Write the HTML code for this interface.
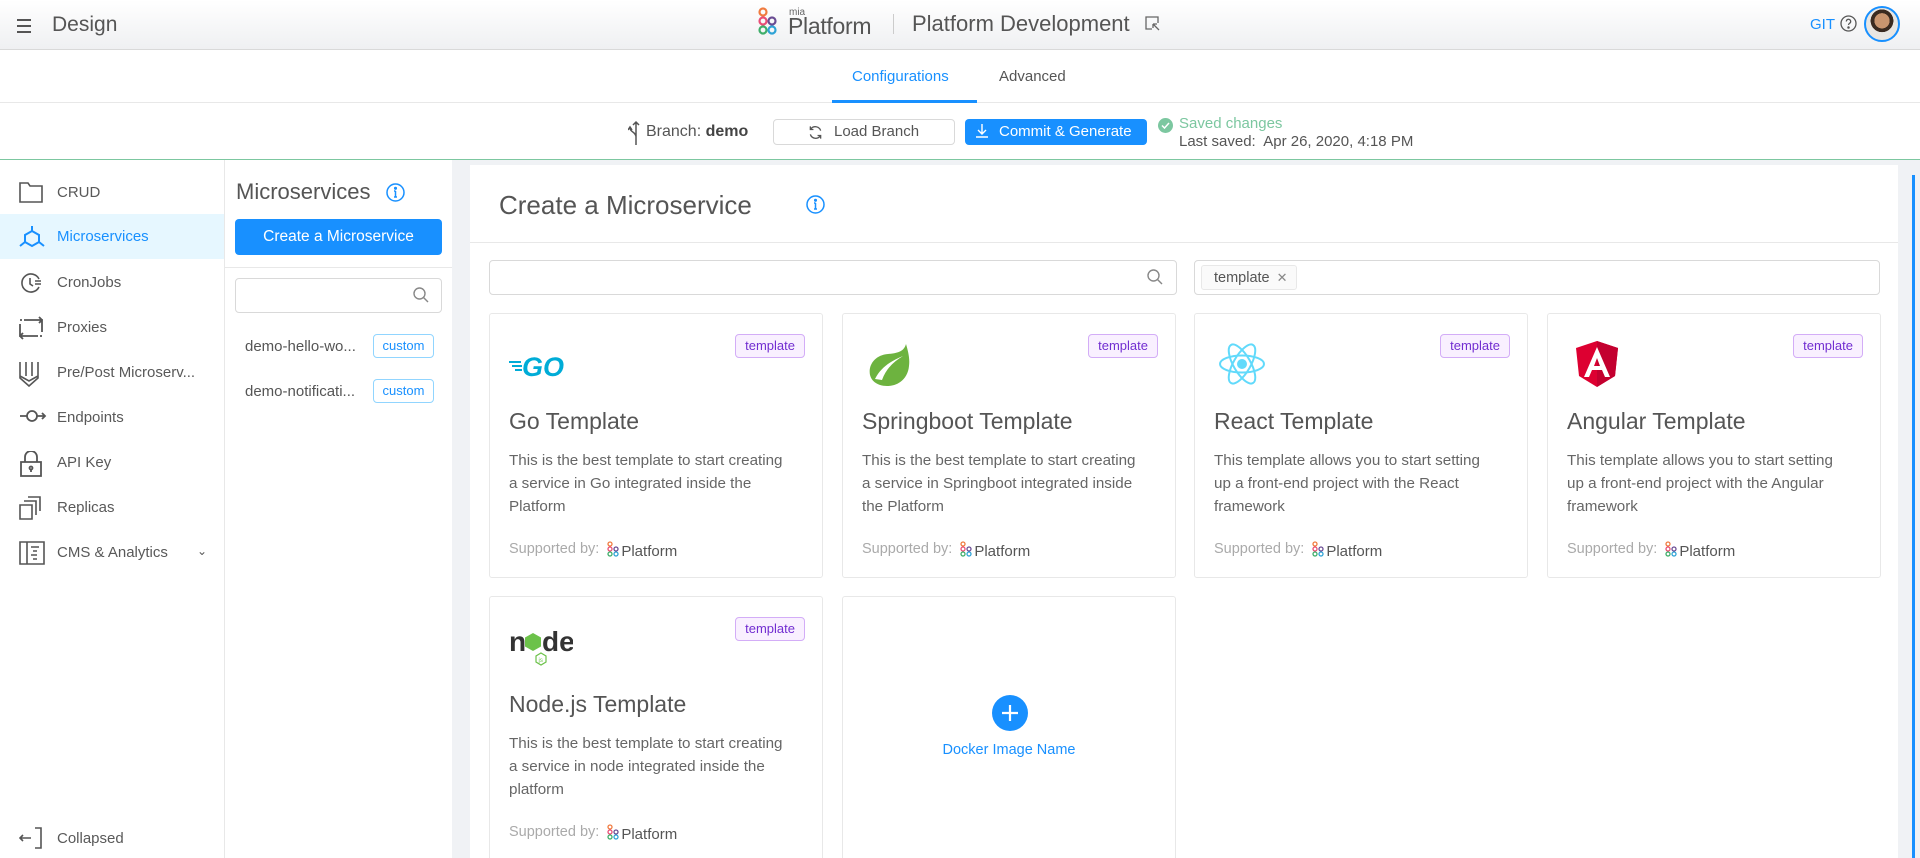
<!DOCTYPE html>
<html><head><meta charset="utf-8"><style>
*{box-sizing:border-box;margin:0;padding:0}
html,body{width:1920px;height:858px;overflow:hidden}
body{font-family:"Liberation Sans",sans-serif;color:#595959;background:#fff;position:relative}
.abs{position:absolute}
.hdr{left:0;top:0;width:1920px;height:50px;background:linear-gradient(#fff,#eff0f2);border-bottom:1px solid #d9d9d9}
.tabs{left:0;top:51px;width:1920px;height:52px;border-bottom:1px solid #e8e8e8;background:#fff}
.br{left:0;top:103px;width:1920px;height:57px;border-bottom:1px solid #7cc7a0;background:#fff}
.side{left:0;top:160px;width:225px;height:698px;border-right:1px solid #e8e8e8}
.si{position:absolute;left:0;width:224px;height:45px;font-size:15px;line-height:45px;padding-left:57px;color:#595959}
.si svg{position:absolute;left:19px;top:11px}
.col{left:225px;top:160px;width:227px;height:698px}
.main{left:452px;top:160px;width:1468px;height:698px;background:#f0f2f5;overflow:hidden}
.card{position:absolute;background:#fff;border:1px solid #e8e8e8;border-radius:3px;width:334px}
.tg{position:absolute;top:20px;right:17px;height:24px;padding:0 9px;font-size:13px;line-height:22px;color:#722ed1;background:#f9f0ff;border:1px solid #d3adf7;border-radius:4px}
.ct{position:absolute;left:19px;top:94px;font-size:23px;color:#555}
.cd{position:absolute;left:19px;top:135px;width:310px;font-size:15.2px;line-height:23px;color:#666;white-space:nowrap}
.sb{position:absolute;left:19px;top:224px;font-size:14.5px;color:#aaa;display:flex;align-items:center}
.inp{position:absolute;border:1px solid #d9d9d9;border-radius:4px;background:#fff}
</style></head><body>
<div class="abs hdr">
 <div class="abs" style="left:17px;top:19px;width:14px">
  <div style="height:2px;background:#555;margin-bottom:4px"></div><div style="height:2px;background:#555;margin-bottom:4px"></div><div style="height:2px;background:#555"></div></div>
 <div class="abs" style="left:52px;top:13px;font-size:21px;color:#555">Design</div>
 <svg class="abs" style="left:757px;top:7px" width="28" height="28" viewBox="0 0 28 28" fill="none" stroke-width="2.2">
  <circle cx="6" cy="5" r="3.5" stroke="#f07b3f"/><circle cx="6" cy="14" r="3.5" stroke="#e94e77"/><circle cx="15" cy="14" r="3.5" stroke="#6a4c93"/><circle cx="6" cy="23" r="3.5" stroke="#3fae6a"/><circle cx="15" cy="23" r="3.5" stroke="#2ea3d6"/></svg>
 <div class="abs" style="left:789px;top:7px;font-size:10px;color:#666">mia</div>
 <div class="abs" style="left:788px;top:13px;font-size:23px;color:#555;letter-spacing:-0.3px">Platform</div>
 <div class="abs" style="left:893px;top:14px;width:1px;height:20px;background:#ccc"></div>
 <div class="abs" style="left:912px;top:11px;font-size:22px;color:#555">Platform Development</div>
 <svg class="abs" style="left:1145px;top:16px" width="15" height="15" viewBox="0 0 15 15" fill="none" stroke="#666" stroke-width="1.3"><path d="M13 7V1H1v12h6"/><path d="M8 8l6 6M8 8h4M8 8v4"/></svg>
 <div class="abs" style="left:1810px;top:16px;font-size:15px;color:#1890ff">GIT</div>
 <svg class="abs" style="left:1840px;top:15px" width="17" height="17" viewBox="0 0 17 17" fill="none" stroke="#555" stroke-width="1.3"><circle cx="8.5" cy="8.5" r="7.5"/><path d="M6.3 6.5a2.2 2.2 0 114 1.2c-.8.7-1.8 1-1.8 2.3"/><circle cx="8.5" cy="12.5" r=".6" fill="#555"/></svg>
 <div class="abs" style="left:1864px;top:6px;width:36px;height:36px;border-radius:50%;border:2px solid #1890ff;background:radial-gradient(circle at 50% 40%,#c9956f 0 30%,#3a2a20 31% 45%,#e9e6e2 46%)"></div>
</div>
<div class="abs tabs">
 <div class="abs" style="left:852px;top:17px;font-size:15px;color:#1890ff">Configurations</div>
 <div class="abs" style="left:832px;top:49px;width:145px;height:3px;background:#1890ff"></div>
 <div class="abs" style="left:999px;top:17px;font-size:15px;color:#555">Advanced</div>
</div>
<div class="abs br">
 <svg class="abs" style="left:628px;top:17px" width="14" height="26" viewBox="0 0 14 26" fill="none" stroke="#555" stroke-width="1.5"><path d="M8 25V2M5 5l3-3 3 3M8 17C8 12 2 12 2 8M0 10l2-3 2 3"/></svg>
 <div class="abs" style="left:646px;top:20px;font-size:16px;color:#555">Branch: <b style="color:#444">demo</b></div>
 <div class="abs" style="left:773px;top:16px;width:182px;height:26px;border:1px solid #d9d9d9;border-radius:4px;font-size:15px;line-height:24px;color:#555;padding-left:60px">Load Branch</div>
 <svg class="abs" style="left:808px;top:22px" width="15" height="15" viewBox="0 0 16 16" fill="none" stroke="#555" stroke-width="1.4"><path d="M13.5 6A6 6 0 002.8 4.5M2.5 10a6 6 0 0010.7 1.5M2.5 1.5v3.3h3.3M13.5 14.5v-3.3h-3.3"/></svg>
 <div class="abs" style="left:965px;top:16px;width:182px;height:26px;background:#1890ff;border-radius:4px;font-size:15px;line-height:26px;color:#fff;padding-left:34px">Commit &amp; Generate</div>
 <svg class="abs" style="left:975px;top:20px" width="14" height="16" viewBox="0 0 14 16" fill="none" stroke="#fff" stroke-width="1.4"><path d="M7 1v10M3 7l4 4 4-4M1 14h12"/></svg>
 <div class="abs" style="left:1158px;top:15px;width:15px;height:15px;border-radius:50%;background:#7cc7a0"></div>
 <svg class="abs" style="left:1161px;top:18px" width="9" height="9" viewBox="0 0 9 9" fill="none" stroke="#fff" stroke-width="1.5"><path d="M1 4.5l2.5 2.5L8 2"/></svg>
 <div class="abs" style="left:1179px;top:12px;font-size:15px;color:#7cc7a0">Saved changes</div>
 <div class="abs" style="left:1179px;top:30px;font-size:15px;color:#555">Last saved:&nbsp; Apr 26, 2020, 4:18 PM</div>
</div>
<div class="abs side">
 <div class="si" style="top:10px"><svg width="24" height="22" viewBox="0 0 24 22" fill="none" stroke="#555" stroke-width="1.6"><path d="M1 2h8l2 3h12v16H1z"/></svg>CRUD</div>
 <div class="si" style="top:54px;background:#e6f7ff;color:#1890ff"><svg width="26" height="24" viewBox="0 0 26 24" fill="none" stroke="#1890ff" stroke-width="2"><path d="M13 1v5M13 6l7 4v7l-7 4-7-4v-7zM6 17l-5 4M20 17l5 4"/></svg>Microservices</div>
 <div class="si" style="top:100px"><svg width="24" height="24" viewBox="0 0 24 24" fill="none" stroke="#555" stroke-width="1.6"><path d="M20 8A9 9 0 1020 16"/><path d="M11 7v6l3 2M16 10h6M16 13h6"/></svg>CronJobs</div>
 <div class="si" style="top:145px"><svg width="24" height="24" viewBox="0 0 24 24" fill="none" stroke="#555" stroke-width="1.8"><path d="M5 4h18v12M1 4h2M20 1l3 3-3 3M19 20H1V8M21 20h2M4 23l-3-3 3-3"/></svg>Proxies</div>
 <div class="si" style="top:190px"><svg width="20" height="26" viewBox="0 0 20 26" fill="none" stroke="#555" stroke-width="1.6"><path d="M1 1v16l9 8 9-8V1M7 1v14M13 1v14M1 15l9 5 9-5"/></svg>Pre/Post Microserv...</div>
 <div class="si" style="top:235px"><svg width="28" height="20" viewBox="0 0 28 20" fill="none" stroke="#555" stroke-width="1.8"><path d="M1 10h7M18 10h8M23 7l3 3-3 3"/><circle cx="13" cy="10" r="5"/></svg>Endpoints</div>
 <div class="si" style="top:280px"><svg width="24" height="26" viewBox="0 0 24 26" fill="none" stroke="#555" stroke-width="1.8"><path d="M2 11h20v14H2zM6 11V6a6 6 0 0112 0v5"/><circle cx="12" cy="17" r="1.5"/><path d="M12 18v3"/></svg>API Key</div>
 <div class="si" style="top:325px"><svg width="22" height="24" viewBox="0 0 22 24" fill="none" stroke="#555" stroke-width="1.6"><path d="M1 9h12v14H1zM5 5h12v14M9 1h12v14"/></svg>Replicas</div>
 <div class="si" style="top:370px"><svg width="26" height="24" viewBox="0 0 26 24" fill="none" stroke="#555" stroke-width="1.6"><path d="M1 1h24v22H1zM8 1v22M12 6h8M14 10h4M12 14h6M14 18h4"/></svg>CMS &amp; Analytics<span style="position:absolute;left:197px;top:-1px;font-size:12px">&#8964;</span></div>
 <div class="si" style="top:656px"><svg width="24" height="22" viewBox="0 0 24 22" fill="none" stroke="#555" stroke-width="1.6"><path d="M16 1h6v20h-6M1 11h11M4 8l-3 3 3 3"/></svg>Collapsed</div>
</div>
<div class="abs col">
 <div class="abs" style="left:11px;top:19px;font-size:22px;color:#555">Microservices</div>
 <svg class="abs" style="left:161px;top:23px" width="19" height="19" viewBox="0 0 19 19" fill="none" stroke="#1890ff" stroke-width="1.5"><circle cx="9.5" cy="9.5" r="8.5"/><path d="M9.5 8v6M8 14h3M8 8h1.5"/><circle cx="9.5" cy="5.3" r=".8" fill="#1890ff"/></svg>
 <div class="abs" style="left:10px;top:59px;width:207px;height:36px;background:#1890ff;border-radius:4px;color:#fff;font-size:15.5px;line-height:36px;text-align:center">Create a Microservice</div>
 <div class="abs" style="left:0;top:107px;width:227px;height:1px;background:#e8e8e8"></div>
 <div class="inp" style="left:10px;top:118px;width:207px;height:35px"></div>
 <svg class="abs" style="left:188px;top:127px" width="16" height="16" viewBox="0 0 16 16" fill="none" stroke="#888" stroke-width="1.4"><circle cx="6.5" cy="6.5" r="5.5"/><path d="M10.5 10.5l4.5 4.5"/></svg>
 <div class="abs" style="left:20px;top:178px;font-size:15px;color:#555">demo-hello-wo...</div>
 <div class="abs" style="left:148px;top:174px;width:61px;height:24px;border:1px solid #91d5ff;border-radius:4px;color:#1890ff;font-size:13px;line-height:22px;text-align:center">custom</div>
 <div class="abs" style="left:20px;top:223px;font-size:15px;color:#555">demo-notificati...</div>
 <div class="abs" style="left:148px;top:219px;width:61px;height:24px;border:1px solid #91d5ff;border-radius:4px;color:#1890ff;font-size:13px;line-height:22px;text-align:center">custom</div>
</div>
<div class="abs main">
 <div class="abs" style="left:1460px;top:15px;width:3px;height:683px;background:#1890ff"></div>
 <div class="abs" style="left:18px;top:5px;width:1428px;height:693px;background:#fff;overflow:hidden">
  <div class="abs" style="left:29px;top:25px;font-size:26px;color:#555">Create a Microservice</div>
  <svg class="abs" style="left:336px;top:30px" width="19" height="19" viewBox="0 0 19 19" fill="none" stroke="#1890ff" stroke-width="1.5"><circle cx="9.5" cy="9.5" r="8.5"/><path d="M9.5 8v6M8 14h3M8 8h1.5"/><circle cx="9.5" cy="5.3" r=".8" fill="#1890ff"/></svg>
  <div class="abs" style="left:0;top:77px;width:1428px;height:1px;background:#e8e8e8"></div>
  <div class="inp" style="left:19px;top:95px;width:688px;height:35px"></div>
  <svg class="abs" style="left:677px;top:104px" width="16" height="16" viewBox="0 0 16 16" fill="none" stroke="#888" stroke-width="1.4"><circle cx="6.5" cy="6.5" r="5.5"/><path d="M10.5 10.5l4.5 4.5"/></svg>
  <div class="inp" style="left:724px;top:95px;width:686px;height:35px"></div>
  <div class="abs" style="left:731px;top:100px;width:96px;height:25px;background:#fafafa;border:1px solid #e8e8e8;border-radius:3px;font-size:14.5px;line-height:23px;padding-left:12px;color:#555">template <span style="font-size:13px;color:#888;margin-left:3px">✕</span></div>

  <div class="card" style="left:19px;top:148px;height:265px">
   <div class="tg">template</div>
   <svg class="abs" style="left:19px;top:38px" width="66" height="28" viewBox="0 0 66 28"><g fill="#00acd7"><rect x="0" y="9" width="12" height="2"/><rect x="3" y="13" width="10" height="2"/><rect x="6" y="17" width="7" height="2"/></g><text x="13" y="24" font-family="Liberation Sans" font-weight="bold" font-style="italic" font-size="27" fill="#00acd7">GO</text></svg>
   <div class="ct">Go Template</div>
   <div class="cd">This is the best template to start creating<br>a service in Go integrated inside the<br>Platform</div>
   <div class="sb">Supported by:&nbsp;&nbsp;<svg width="14" height="16" viewBox="0 0 14 16" fill="none" stroke-width="1.3"><circle cx="3" cy="3" r="2" stroke="#f07b3f"/><circle cx="3" cy="8" r="2" stroke="#e94e77"/><circle cx="9" cy="8" r="2" stroke="#6a4c93"/><circle cx="3" cy="13" r="2" stroke="#3fae6a"/><circle cx="9" cy="13" r="2" stroke="#2ea3d6"/></svg><span style="color:#555;font-size:15px;margin-top:5px">Platform</span></div>
  </div>
  <div class="card" style="left:372px;top:148px;height:265px">
   <div class="tg">template</div>
   <svg class="abs" style="left:23px;top:27px" width="46" height="46" viewBox="0 0 46 46"><path d="M40 3C38 10 33 12 22 13 9 14 2 24 4 34c2 8 10 11 17 11 12 0 21-8 22-20 1-8-1-15-3-22z" fill="#6db33f"/><path d="M9 38c6-12 16-18 28-23-10 6-17 13-21 24z" fill="#fff"/></svg>
   <div class="ct">Springboot Template</div>
   <div class="cd">This is the best template to start creating<br>a service in Springboot integrated inside<br>the Platform</div>
   <div class="sb">Supported by:&nbsp;&nbsp;<svg width="14" height="16" viewBox="0 0 14 16" fill="none" stroke-width="1.3"><circle cx="3" cy="3" r="2" stroke="#f07b3f"/><circle cx="3" cy="8" r="2" stroke="#e94e77"/><circle cx="9" cy="8" r="2" stroke="#6a4c93"/><circle cx="3" cy="13" r="2" stroke="#3fae6a"/><circle cx="9" cy="13" r="2" stroke="#2ea3d6"/></svg><span style="color:#555;font-size:15px;margin-top:5px">Platform</span></div>
  </div>
  <div class="card" style="left:724px;top:148px;height:265px">
   <div class="tg">template</div>
   <svg class="abs" style="left:23px;top:28px" width="48" height="44" viewBox="0 0 48 44" fill="none" stroke="#61dafb" stroke-width="2"><ellipse cx="24" cy="22" rx="22" ry="8.5"/><ellipse cx="24" cy="22" rx="22" ry="8.5" transform="rotate(60 24 22)"/><ellipse cx="24" cy="22" rx="22" ry="8.5" transform="rotate(120 24 22)"/><circle cx="24" cy="22" r="4" fill="#61dafb"/></svg>
   <div class="ct">React Template</div>
   <div class="cd">This template allows you to start setting<br>up a front-end project with the React<br>framework</div>
   <div class="sb">Supported by:&nbsp;&nbsp;<svg width="14" height="16" viewBox="0 0 14 16" fill="none" stroke-width="1.3"><circle cx="3" cy="3" r="2" stroke="#f07b3f"/><circle cx="3" cy="8" r="2" stroke="#e94e77"/><circle cx="9" cy="8" r="2" stroke="#6a4c93"/><circle cx="3" cy="13" r="2" stroke="#3fae6a"/><circle cx="9" cy="13" r="2" stroke="#2ea3d6"/></svg><span style="color:#555;font-size:15px;margin-top:5px">Platform</span></div>
  </div>
  <div class="card" style="left:1077px;top:148px;height:265px">
   <div class="tg">template</div>
   <svg class="abs" style="left:27px;top:26px" width="44" height="48" viewBox="0 0 44 48"><path d="M22 1L1 8l3 28 18 11 18-11 3-28z" fill="#dd0031"/><path d="M22 1v46l18-11 3-28z" fill="#c3002f"/><path d="M22 7L9 37h5l3-7h10l3 7h5zM19 26l3-8 3 8z" fill="#fff"/></svg>
   <div class="ct">Angular Template</div>
   <div class="cd">This template allows you to start setting<br>up a front-end project with the Angular<br>framework</div>
   <div class="sb">Supported by:&nbsp;&nbsp;<svg width="14" height="16" viewBox="0 0 14 16" fill="none" stroke-width="1.3"><circle cx="3" cy="3" r="2" stroke="#f07b3f"/><circle cx="3" cy="8" r="2" stroke="#e94e77"/><circle cx="9" cy="8" r="2" stroke="#6a4c93"/><circle cx="3" cy="13" r="2" stroke="#3fae6a"/><circle cx="9" cy="13" r="2" stroke="#2ea3d6"/></svg><span style="color:#555;font-size:15px;margin-top:5px">Platform</span></div>
  </div>

  <div class="card" style="left:19px;top:431px;height:300px">
   <div class="tg">template</div>
   <svg class="abs" style="left:19px;top:30px" width="64" height="42" viewBox="0 0 64 42"><text x="0" y="24" font-family="Liberation Sans" font-weight="bold" font-size="28" fill="#333">n</text><path d="M24 6l8 4.5v9L24 24l-8-4.5v-9z" fill="#6cc24a"/><text x="33" y="24" font-family="Liberation Sans" font-weight="bold" font-size="28" fill="#333">de</text><path d="M32 26l5 3v6l-5 3-5-3v-6z" fill="none" stroke="#6cc24a" stroke-width="1.2"/><text x="29.5" y="35" font-family="Liberation Sans" font-size="6" fill="#6cc24a">js</text></svg>
   <div class="ct">Node.js Template</div>
   <div class="cd">This is the best template to start creating<br>a service in node integrated inside the<br>platform</div>
   <div class="sb">Supported by:&nbsp;&nbsp;<svg width="14" height="16" viewBox="0 0 14 16" fill="none" stroke-width="1.3"><circle cx="3" cy="3" r="2" stroke="#f07b3f"/><circle cx="3" cy="8" r="2" stroke="#e94e77"/><circle cx="9" cy="8" r="2" stroke="#6a4c93"/><circle cx="3" cy="13" r="2" stroke="#3fae6a"/><circle cx="9" cy="13" r="2" stroke="#2ea3d6"/></svg><span style="color:#555;font-size:15px;margin-top:5px">Platform</span></div>
  </div>
  <div class="card" style="left:372px;top:431px;height:300px">
   <div class="abs" style="left:149px;top:98px;width:36px;height:36px;border-radius:50%;background:#1890ff"></div>
   <svg class="abs" style="left:158px;top:107px" width="18" height="18" viewBox="0 0 18 18" stroke="#fff" stroke-width="2.2"><path d="M9 1v16M1 9h16"/></svg>
   <div class="abs" style="left:0;width:332px;top:145px;text-align:center;font-size:14.5px;color:#1890ff">Docker Image Name</div>
  </div>
 </div>
</div>
</body></html>
